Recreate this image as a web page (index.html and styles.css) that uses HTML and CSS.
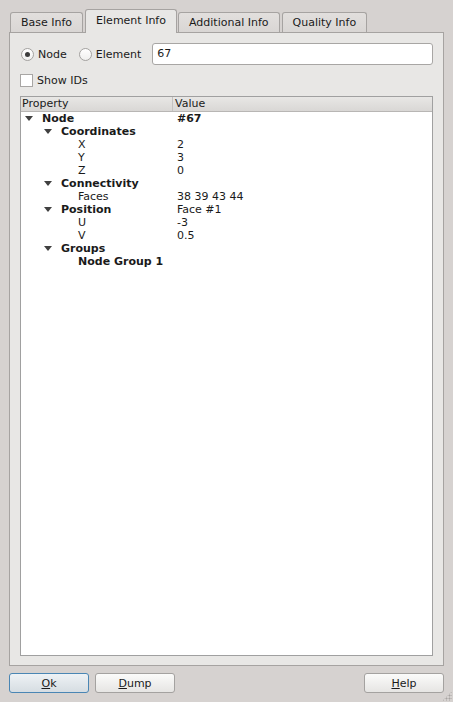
FILE: index.html
```html
<!DOCTYPE html>
<html>
<head>
<meta charset="utf-8">
<link rel="stylesheet" href="styles.css">
</head>
<body>
<div class="dialog">
  <div class="tabbar">
    <div class="tab">Base Info</div>
    <div class="tab selected">Element Info</div>
    <div class="tab">Additional Info</div>
    <div class="tab">Quality Info</div>
  </div>
  <div class="pane">
    <div class="selrow">
      <label class="radio"><span class="circle checked"></span><span>Node</span></label>
      <label class="radio"><span class="circle"></span><span>Element</span></label>
      <div class="field">67</div>
    </div>
    <label class="check"><span class="box"></span><span>Show IDs</span></label>
    <div class="tree">
      <div class="header">
        <div class="hcol c1">Property</div>
        <div class="hcol h2">Value</div>
      </div>
      <div class="row"><div class="c1 l1 b"><span class="arrow"></span>Node</div><div class="c2 b">#67</div></div>
      <div class="row"><div class="c1 l2 b"><span class="arrow"></span>Coordinates</div><div class="c2"></div></div>
      <div class="row"><div class="c1 l3">X</div><div class="c2">2</div></div>
      <div class="row"><div class="c1 l3">Y</div><div class="c2">3</div></div>
      <div class="row"><div class="c1 l3">Z</div><div class="c2">0</div></div>
      <div class="row"><div class="c1 l2 b"><span class="arrow"></span>Connectivity</div><div class="c2"></div></div>
      <div class="row"><div class="c1 l3">Faces</div><div class="c2">38 39 43 44</div></div>
      <div class="row"><div class="c1 l2 b"><span class="arrow"></span>Position</div><div class="c2">Face #1</div></div>
      <div class="row"><div class="c1 l3">U</div><div class="c2">-3</div></div>
      <div class="row"><div class="c1 l3">V</div><div class="c2">0.5</div></div>
      <div class="row"><div class="c1 l2 b"><span class="arrow"></span>Groups</div><div class="c2"></div></div>
      <div class="row"><div class="c1 l3 b">Node Group 1</div><div class="c2"></div></div>
    </div>
  </div>
  <div class="buttons">
    <button class="btn default"><u>O</u>k</button>
    <button class="btn"><u>D</u>ump</button>
    <span class="spacer"></span>
    <button class="btn"><u>H</u>elp</button>
  </div>
  <div class="grip"></div>
</div>
</body>
</html>
```
FILE: styles.css
```css
html, body {
  margin: 0;
  padding: 0;
  background: #d6d2d0;
}
body {
  font-family: "DejaVu Sans", sans-serif;
  font-size: 11px;
  color: #1a1a1a;
  width: 453px;
  height: 702px;
  overflow: hidden;
}
.dialog {
  position: relative;
  height: 702px;
  padding: 9px 9px 0 9px;
  box-sizing: border-box;
}
.tabbar {
  display: flex;
  align-items: flex-end;
  padding-left: 1px;
  height: 23px;
  position: relative;
  z-index: 2;
}
.tab {
  height: 20px;
  line-height: 19px;
  box-sizing: border-box;
  padding: 0 10px;
  border: 1px solid #a6a3a1;
  border-bottom: none;
  border-radius: 3px 3px 0 0;
  background: linear-gradient(#e2dfdd, #d9d6d4);
  margin-right: 2px;
  color: #1a1a1a;
}
.tab.selected {
  height: 24px;
  margin-bottom: -1px;
  line-height: 21px;
  background: #e8e7e5;
  margin-left: 0;
  margin-right: 1px;
}
.pane {
  border: 1px solid #a6a3a1;
  background: #e8e7e5;
  height: 634px;
  box-sizing: border-box;
  padding: 10px 10px 9px 10px;
  display: flex;
  flex-direction: column;
}
.selrow {
  display: flex;
  align-items: center;
  height: 22px;
}
.radio {
  display: flex;
  align-items: center;
  margin-left: 1px;
  margin-right: 12px;
}
.radio + .radio {
  margin-left: 0;
  margin-right: 11px;
}
.circle {
  width: 11px;
  height: 11px;
  border-radius: 50%;
  border: 1px solid #a4a2a0;
  background: linear-gradient(#ffffff, #f0efee);
  margin-right: 4px;
  position: relative;
}
.circle.checked::after {
  content: "";
  position: absolute;
  left: 3px;
  top: 3px;
  width: 5px;
  height: 5px;
  border-radius: 50%;
  background: #3c3c3c;
}
.field {
  flex: 1;
  height: 22px;
  box-sizing: border-box;
  border: 1px solid #a8a6a4;
  border-radius: 3px;
  background: #fff;
  padding-left: 4px;
  line-height: 20px;
}
.check {
  display: flex;
  align-items: center;
  margin-top: 9px;
  height: 13px;
}
.box {
  width: 11px;
  height: 11px;
  border: 1px solid #a8a6a4;
  background: #fff;
  margin-right: 4px;
}
.tree {
  margin-top: 9px;
  flex: 1;
  border: 1px solid #a0a0a0;
  background: #fff;
}
.header {
  display: flex;
  height: 14px;
  border-bottom: 1px solid #b8b6b4;
  background: linear-gradient(#e8e7e5, #d9d7d5);
  line-height: 14px;
}
.hcol.c1 {
  border-right: 1px solid #c4c2c0;
  padding-left: 1px;
  box-sizing: border-box;
}
.h2 {
  padding-left: 2px;
}
.c1 {
  width: 152px;
  flex: none;
  box-sizing: border-box;
}
.c2 {
  padding-left: 4px;
}
.row {
  display: flex;
  height: 13px;
  line-height: 13px;
}
.b {
  font-weight: bold;
}
.l1 { padding-left: 4px; }
.l2 { padding-left: 23px; }
.l3 { padding-left: 57px; }
.arrow {
  display: inline-block;
  width: 0;
  height: 0;
  border-left: 4px solid transparent;
  border-right: 4px solid transparent;
  border-top: 5px solid #404040;
  margin-right: 9px;
  vertical-align: 1px;
}
.buttons {
  display: flex;
  margin-top: 7px;
  gap: 6px;
}
.spacer {
  flex: 1;
}
.btn {
  width: 80px;
  height: 20px;
  font-family: "DejaVu Sans", sans-serif;
  font-size: 11px;
  color: #1a1a1a;
  border: 1px solid #a4a2a0;
  border-radius: 3px;
  background: linear-gradient(#fbfbfa, #e6e5e3);
  padding: 0;
  margin: 0;
}
.btn.default {
  border-color: #4a86b4;
  background: linear-gradient(#eef2f5, #d6dde2);
}
.grip {
  position: absolute;
  right: 1px;
  bottom: 1px;
  width: 10px;
  height: 10px;
  background-image: radial-gradient(circle, #a8a4a2 0.9px, transparent 1.1px);
  background-size: 3px 3px;
  clip-path: polygon(100% 0, 100% 100%, 0 100%);
}
```
